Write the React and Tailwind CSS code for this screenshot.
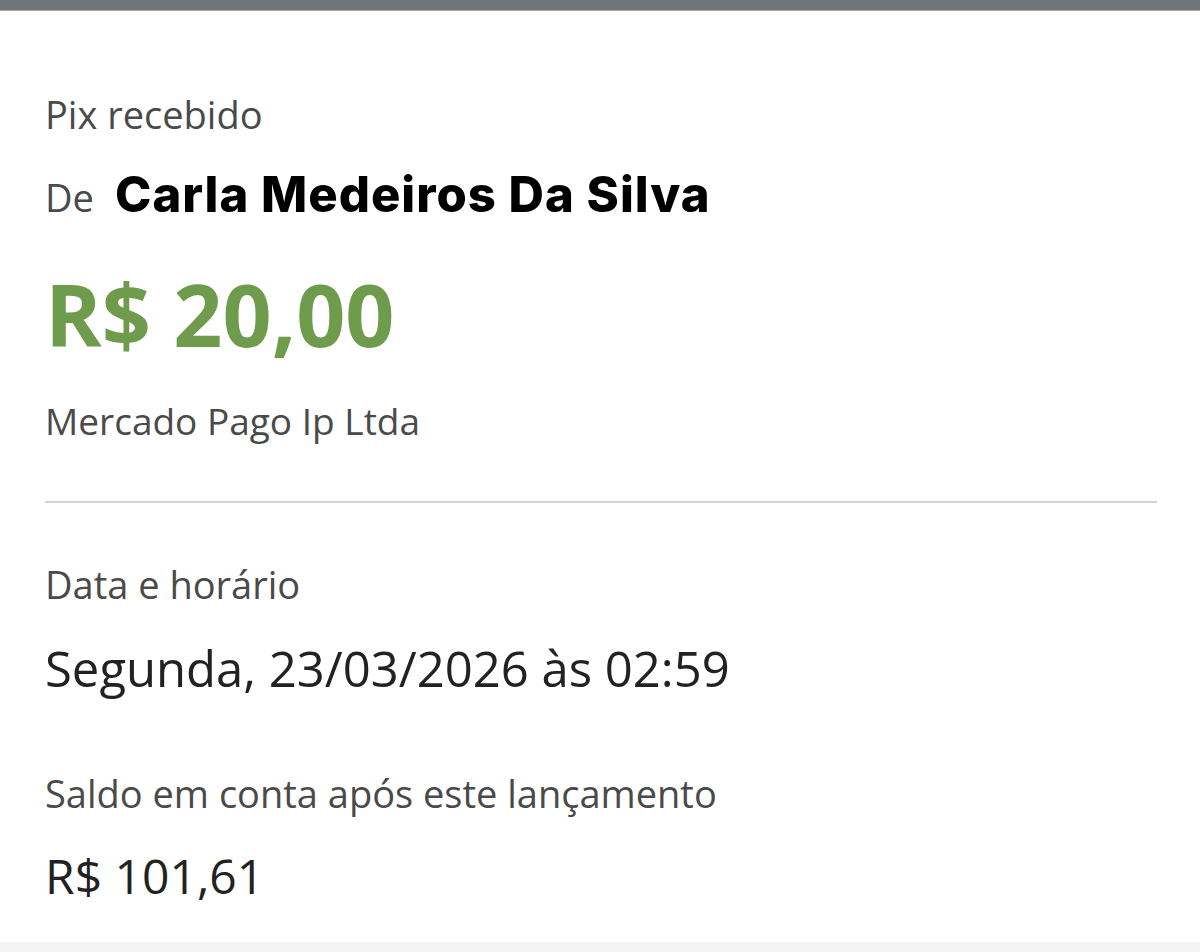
import React from 'react';

export default function App() {
  return (
    <div className="min-h-[952px] w-[1200px] bg-white flex flex-col font-['Open_Sans',sans-serif]">
      <div className="h-[11px] bg-[#6f7579] border-b border-[#a4a8aa]" />
      <div className="flex-1 pl-[45px] pr-[43px]">
        <div className="mt-[81px] text-[38px] leading-[44px] text-[#4a4a4a]">Pix recebido</div>
        <div className="mt-[31px] flex items-baseline">
          <span className="w-[70px] text-[38px] leading-[56px] text-[#4a4a4a]">De</span>
          <span className="text-[49px] leading-[56px] font-extrabold tracking-[1px] text-black font-['Inter',sans-serif]">
            Carla Medeiros Da Silva
          </span>
        </div>
        <div className="mt-[46px] text-[86px] leading-[86px] font-bold text-[#6f9c4c]">R$ 20,00</div>
        <div className="mt-[42px] text-[37px] leading-[44px] text-[#4a4a4a]">Mercado Pago Ip Ltda</div>
        <div className="mt-[58px] h-[2px] bg-[#d4d4d4]" />
        <div className="mt-[59px] text-[38px] leading-[44px] text-[#4a4a4a]">Data e horário</div>
        <div className="mt-[34px] text-[49px] leading-[56px] text-[#222]">Segunda, 23/03/2026 às 02:59</div>
        <div className="mt-[75px] text-[38px] leading-[44px] text-[#4a4a4a]">Saldo em conta após este lançamento</div>
        <div className="mt-[33px] text-[48px] leading-[56px] text-[#222]">R$ 101,61</div>
      </div>
      <div className="h-[10px] bg-[#f4f4f4]" />
    </div>
  );
}
